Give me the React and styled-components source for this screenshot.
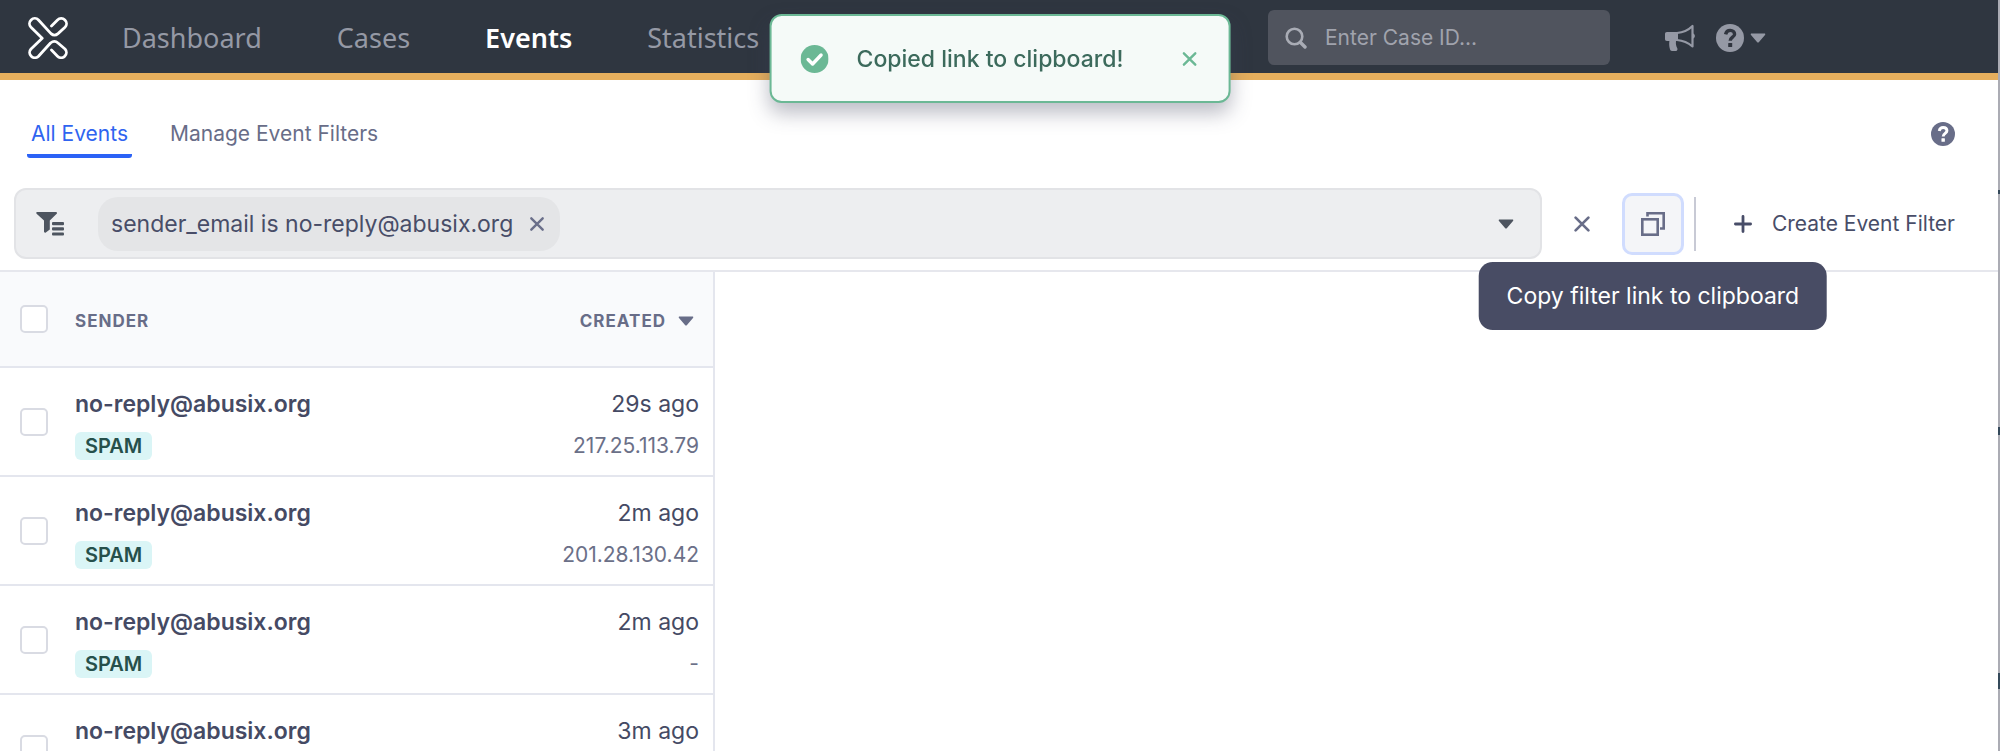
import React from "react";
import styled, { createGlobalStyle } from "styled-components";

const events = [
  { id: 1, sender: "no-reply@abusix.org", type: "SPAM", created: "29s ago", ip: "217.25.113.79" },
  { id: 2, sender: "no-reply@abusix.org", type: "SPAM", created: "2m ago", ip: "201.28.130.42" },
  { id: 3, sender: "no-reply@abusix.org", type: "SPAM", created: "2m ago", ip: "-" },
  { id: 4, sender: "no-reply@abusix.org", type: "SPAM", created: "3m ago", ip: "-" },
];

function CrossIcon({ size }) {
  return (
    <svg width={size} height={size} viewBox="0 0 16 16" fill="none" stroke="currentColor" strokeWidth="2.4" strokeLinecap="round">
      <path d="M2.3 2.3L13.7 13.7M13.7 2.3L2.3 13.7" />
    </svg>
  );
}

function CaretIcon() {
  return (
    <svg width="16" height="10" viewBox="0 0 16 10" fill="currentColor">
      <path d="M1.6 0.5H14.4C15.3 0.5 15.6 1.2 15 1.9L9 8.9C8.4 9.6 7.6 9.6 7 8.9L1 1.9C0.4 1.2 0.7 0.5 1.6 0.5Z" />
    </svg>
  );
}

function HelpIcon({ size, mark }) {
  return (
    <svg width={size} height={size} viewBox="0 0 28 28" fill="none">
      <circle cx="14" cy="14" r="14" fill="currentColor" />
      <path d="M9.6 10.4C10.1 7.9 11.8 6.4 14.2 6.4C16.9 6.4 18.6 8.1 18.6 10.2C18.6 13.2 14.2 13.3 14.2 16.8" stroke={mark} strokeWidth="3.4" />
      <rect x="12.2" y="19" width="4" height="4" rx="0.6" fill={mark} />
    </svg>
  );
}

function App() {
  return (
    <Screen>
      <GlobalStyle />
      <Page>
        <TopBar>
          <Logo href="#" aria-label="Home">
            <svg width="40" height="42" viewBox="0 0 40 42" fill="none" stroke="currentColor" strokeWidth="2.8" strokeLinecap="round" strokeLinejoin="round">
              <path d="M23.5 9L29.5 3A5.2 5.2 0 0 1 37 10.3L30 16.6Q26.5 19.6 23 16.6L10.5 3A5.2 5.2 0 0 0 3 10.3L14.2 21.2L3 32A5.2 5.2 0 0 0 10.5 39.2L22.5 26Q26.5 22.8 30 26L37 32A5.2 5.2 0 0 1 29.5 39.2L23.5 33" />
            </svg>
          </Logo>
          <Nav>
            <NavLink href="#dashboard">Dashboard</NavLink>
            <NavLink href="#cases">Cases</NavLink>
            <NavLink href="#events" $active>Events</NavLink>
            <NavLink href="#statistics">Statistics</NavLink>
          </Nav>
          <Search>
            <svg width="22" height="22" viewBox="0 0 22 22" fill="none" stroke="currentColor" strokeWidth="2.6" strokeLinecap="round">
              <circle cx="9.5" cy="9.5" r="7.8" />
              <path d="M15.5 15.5L20 20" strokeWidth="3.4" />
            </svg>
            <SearchInput type="text" aria-label="Case ID" placeholder="Enter Case ID..." />
          </Search>
          <BarButton type="button" aria-label="Announcements">
            <svg width="32" height="28" viewBox="0 0 32 28" fill="currentColor">
              <path d="M3 8H14V17H12C11.6 20 12.2 22.4 13.3 24.3C13.8 25.4 13.2 27 12 27H8C6.8 27 6.2 26 5.9 25C5.2 22.3 5 19.8 5.4 17H3C1.6 17 1 16 1 15V10C1 8.9 1.6 8 3 8Z" />
              <path d="M13 9C19.5 8.5 24 6.5 28.5 2V22.5C24 18.5 19.5 16.5 13 16" fill="none" stroke="currentColor" strokeWidth="2.2" strokeLinejoin="round" />
              <path d="M29 9.5C31.5 10 31.5 14 29 14.5Z" />
            </svg>
          </BarButton>
          <BarButton type="button" aria-label="Help menu">
            <HelpIcon size={28} mark="#30353f" />
            <CaretIcon />
          </BarButton>
        </TopBar>

        <Tabs>
          <Tab href="#all" $active>All Events</Tab>
          <Tab href="#filters">Manage Event Filters</Tab>
          <HelpButton type="button" aria-label="Help">
            <HelpIcon size={24} mark="#ffffff" />
          </HelpButton>
        </Tabs>

        <FilterRow>
          <FilterBox>
            <svg width="28" height="26" viewBox="0 0 28 26" fill="currentColor">
              <path d="M1.2 1H20C21 1 21.3 2 20.7 2.7L13.8 9.5V18.5L9.8 21.5C9 22 8 21.6 8 20.6V9.5L0.6 2.7C-0.1 2 0.2 1 1.2 1Z" />
              <rect x="16" y="11" width="12" height="3.2" rx="1" />
              <rect x="16" y="16.2" width="12" height="3.2" rx="1" />
              <rect x="16" y="21.4" width="12" height="3.2" rx="1" />
            </svg>
            <Chip>
              sender_email is no-reply@abusix.org
              <ChipButton type="button" aria-label="Remove filter">
                <CrossIcon size={16} />
              </ChipButton>
            </Chip>
            <OpenButton type="button" aria-label="Show filter options">
              <CaretIcon />
            </OpenButton>
          </FilterBox>
          <RowItem>
            <IconButton type="button" aria-label="Clear filters">
              <CrossIcon size={18} />
            </IconButton>
          </RowItem>
          <RowItem>
            <IconButton type="button" aria-describedby="copy-tip" aria-label="Copy link" $focused>
              <svg width="26" height="26" viewBox="0 0 26 26" fill="none" stroke="currentColor" strokeWidth="2.6">
                <rect x="2.3" y="8.3" width="15.4" height="15.4" />
                <path d="M7.5 5.5V2.3H23.7V17.5H20" />
              </svg>
            </IconButton>
            <Tooltip id="copy-tip" role="tooltip">Copy filter link to clipboard</Tooltip>
          </RowItem>
          <Divider />
          <CreateButton type="button">
            <svg width="18" height="18" viewBox="0 0 18 18" fill="none" stroke="currentColor" strokeWidth="2.8" strokeLinecap="round">
              <path d="M9 1.4V16.6M1.4 9H16.6" />
            </svg>
            Create Event Filter
          </CreateButton>
        </FilterRow>

        <Content>
          <ListPane>
            <Table>
              <thead>
                <tr>
                  <HeadCell $check>
                    <Checkbox type="checkbox" aria-label="Select all events" />
                  </HeadCell>
                  <HeadCell>SENDER</HeadCell>
                  <HeadCell $end>
                    <SortButton type="button">
                      CREATED
                      <CaretIcon />
                    </SortButton>
                  </HeadCell>
                </tr>
              </thead>
              <tbody>
                {events.map((event) => (
                  <tr key={event.id}>
                    <Cell $check>
                      <Checkbox type="checkbox" aria-label={`Select event ${event.id}`} />
                    </Cell>
                    <Cell>
                      <Sender>{event.sender}</Sender>
                      <Badge>{event.type}</Badge>
                    </Cell>
                    <Cell $end>
                      <Created>{event.created}</Created>
                      <Address>{event.ip}</Address>
                    </Cell>
                  </tr>
                ))}
              </tbody>
            </Table>
          </ListPane>
        </Content>
      </Page>
      <Edge />

      <Toast role="status">
        <svg width="28" height="28" viewBox="0 0 28 28" fill="none">
          <circle cx="14" cy="14" r="14" fill="#6bb895" />
          <path d="M7.5 14.5L12 19L20.5 10" stroke="#ffffff" strokeWidth="3.4" strokeLinecap="round" strokeLinejoin="round" />
        </svg>
        <ToastText>Copied link to clipboard!</ToastText>
        <ToastClose type="button" aria-label="Dismiss">
          <CrossIcon size={16} />
        </ToastClose>
      </Toast>
    </Screen>
  );
}

const GlobalStyle = createGlobalStyle`
  * {
    box-sizing: border-box;
  }
  body {
    margin: 0;
    background: #ffffff;
    color: #454a64;
    font-family: Inter, "Liberation Sans", sans-serif;
    font-size: 23px;
    line-height: 32px;
  }
  button {
    display: flex;
    align-items: center;
    justify-content: center;
    padding: 0;
    border: 0;
    background: none;
    color: inherit;
    font: inherit;
    cursor: pointer;
  }
  svg {
    display: block;
    flex: none;
  }
`;

const Screen = styled.div`
  display: flex;
  height: 100vh;
`;

const Page = styled.div`
  display: flex;
  flex-direction: column;
  flex: 1;
  min-width: 0;
`;

// sliver of the window behind
const Edge = styled.div`
  width: 2px;
  background: linear-gradient(
    #abacb4 190px, #34495a 190px, #34495a 194px, #abacb4 194px,
    #abacb4 427px, #34495a 427px, #34495a 435px, #abacb4 435px,
    #abacb4 673px, #34495a 673px, #34495a 689px, #abacb4 689px
  );
`;

const TopBar = styled.header`
  display: flex;
  align-items: center;
  flex: none;
  height: 80px;
  padding: 2px 232px 0 28px;
  border-bottom: 7px solid #e6af5d;
  background: #2f3640;
  color: #9599a5;
`;

const Logo = styled.a`
  color: #ffffff;
`;

const Nav = styled.nav`
  display: flex;
  gap: 75px;
  margin-left: 54px;
`;

const NavLink = styled.a`
  color: ${(props) => (props.$active ? "#ffffff" : "#9599a5")};
  font-family: "Noto Sans", sans-serif;
  font-size: 27px;
  font-weight: ${(props) => (props.$active ? 600 : 400)};
  text-decoration: none;
`;

const Search = styled.label`
  display: flex;
  align-items: center;
  gap: 18px;
  width: 342px;
  height: 55px;
  margin-left: auto;
  margin-right: 34px;
  padding: 0 17px;
  border-radius: 6px;
  background: #50545e;
  color: #a9acb5;
`;

const SearchInput = styled.input`
  flex: 1;
  min-width: 0;
  padding: 0;
  border: 0;
  outline: 0;
  background: none;
  color: #ffffff;
  font: inherit;
  font-size: 21px;
  &::placeholder {
    color: #a0a3ad;
    opacity: 1;
  }
`;

const BarButton = styled.button`
  gap: 6px;
  margin-left: 20px;
`;

const Tabs = styled.nav`
  display: flex;
  align-items: center;
  flex: none;
  gap: 34px;
  height: 108px;
  padding: 0 43px 0 27px;
`;

const Tab = styled.a`
  padding: 8px 4px 4px;
  border-bottom: 4px solid ${(props) => (props.$active ? "#2b62f6" : "transparent")};
  border-radius: 3px;
  color: ${(props) => (props.$active ? "#2f64f0" : "#686d88")};
  font-size: 21px;
  text-decoration: none;
`;

const HelpButton = styled.button`
  margin-left: auto;
  color: #686d88;
`;

const FilterRow = styled.div`
  display: flex;
  align-items: center;
  flex: none;
  padding: 0 43px 11px 14px;
  border-bottom: 2px solid #e6e7ed;
`;

const FilterBox = styled.div`
  display: flex;
  align-items: center;
  flex: 1;
  height: 71px;
  padding: 0 26px 0 20px;
  border: 2px solid #e2e3e6;
  border-radius: 12px;
  background: #edeef0;
  color: #4d545f;
`;

const Chip = styled.span`
  display: flex;
  align-items: center;
  gap: 16px;
  height: 54px;
  margin-left: 34px;
  padding: 0 15px 0 13px;
  border-radius: 20px;
  background: #e4e5e7;
  color: #484d68;
`;

const ChipButton = styled.button`
  color: #6a6f8a;
`;

const OpenButton = styled.button`
  margin-left: auto;
`;

const RowItem = styled.div`
  position: relative;
  margin-left: 9px;
`;

const IconButton = styled.button`
  width: 62px;
  height: 62px;
  border: 3px solid ${(props) => (props.$focused ? "#d0dcfe" : "transparent")};
  border-radius: 10px;
  background: ${(props) => (props.$focused ? "#f4f5f8" : "none")};
  color: #686d88;
`;

const Tooltip = styled.div`
  position: absolute;
  top: 69px;
  left: 50%;
  padding: 18px 28px;
  border-radius: 14px;
  background: #484c64;
  color: #ffffff;
  white-space: nowrap;
  transform: translateX(-50%);
  z-index: 1;
`;

const Divider = styled.div`
  width: 2px;
  height: 54px;
  margin-left: 10px;
  background: #c8cad5;
`;

const CreateButton = styled.button`
  gap: 20px;
  margin-left: 38px;
  color: #484d68;
  font-size: 21px;
`;

const Content = styled.main`
  display: flex;
  flex: 1;
  min-height: 0;
`;

const ListPane = styled.section`
  width: 36%;
  min-width: 480px;
  max-width: 715px;
  border-right: 2px solid #e4e6ee;
  overflow: auto;
  scrollbar-width: none;
`;

const Table = styled.table`
  width: 100%;
  border-spacing: 0;
`;

const HeadCell = styled.th`
  width: ${(props) => (props.$check ? "75px" : "auto")};
  height: 96px;
  padding: ${(props) => (props.$check ? "0 0 0 20px" : "4px 0 0")};
  padding-right: ${(props) => (props.$end ? "19px" : "0")};
  border-bottom: 2px solid #e4e6ee;
  background: #f9fafc;
  color: #686d88;
  font-size: 17px;
  font-weight: 700;
  letter-spacing: 1px;
  text-align: left;
`;

const SortButton = styled.button`
  gap: 12px;
  margin-left: auto;
  letter-spacing: 1px;
`;

const Cell = styled.td`
  height: 109px;
  padding: ${(props) => (props.$check ? "0 0 0 20px" : "5px 0 0")};
  padding-right: ${(props) => (props.$end ? "14px" : "0")};
  border-bottom: 2px solid #e4e6ee;
  text-align: ${(props) => (props.$end ? "right" : "left")};
`;

const Checkbox = styled.input`
  display: block;
  width: 28px;
  height: 28px;
  margin: 0;
  border: 2px solid #d9dbe3;
  border-radius: 5px;
  background: #ffffff;
  appearance: none;
  &:checked {
    background: #2b62f6;
  }
`;

const Sender = styled.div`
  margin-bottom: 12px;
  font-weight: 600;
`;

const Badge = styled.span`
  display: block;
  width: max-content;
  padding: 0 10px;
  border-radius: 6px;
  background: #daf5f6;
  color: #26504b;
  font-size: 20px;
  font-weight: 600;
  line-height: 28px;
`;

const Created = styled.div`
  margin-bottom: 12px;
`;

const Address = styled.div`
  color: #6b7088;
  font-size: 21px;
  line-height: 28px;
`;

const Toast = styled.div`
  position: fixed;
  top: 14px;
  left: 50%;
  display: flex;
  align-items: center;
  height: 89px;
  padding: 0 31px 0 29px;
  border: 2px solid #6bb895;
  border-radius: 12px;
  background: #f5faf8;
  box-shadow: 0 10px 20px rgba(60, 62, 90, 0.35);
  color: #3c6a5c;
  transform: translateX(-50%);
  z-index: 2;
`;

const ToastText = styled.span`
  margin: 0 58px 0 28px;
  font-weight: 500;
  white-space: nowrap;
`;

const ToastClose = styled.button`
  color: #6bb895;
`;

export default App;
